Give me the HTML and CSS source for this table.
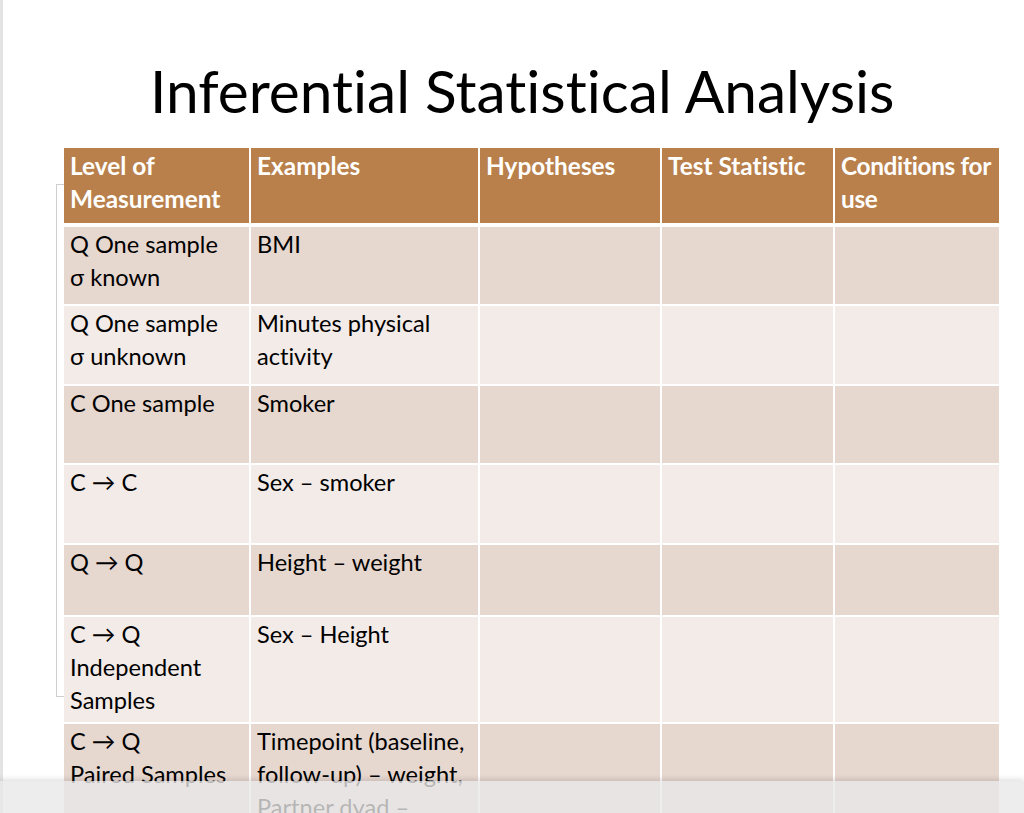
FILE: index.html
```html
<!DOCTYPE html>
<html>
<head>
<meta charset="utf-8">
<link rel="stylesheet" href="styles.css">
</head>
<body>
<div class="page">
  <div class="bracket"></div>
  <h1 class="title">Inferential Statistical Analysis</h1>
  <div class="grid head">
    <div class="cell">Level of Measurement</div>
    <div class="cell">Examples</div>
    <div class="cell">Hypotheses</div>
    <div class="cell">Test Statistic</div>
    <div class="cell tight">Conditions for use</div>
  </div>
  <div class="grid body">
    <div class="cell odd">Q One sample<br>σ known</div>
    <div class="cell odd">BMI</div>
    <div class="cell odd"></div>
    <div class="cell odd"></div>
    <div class="cell odd"></div>

    <div class="cell even">Q One sample<br>σ unknown</div>
    <div class="cell even">Minutes physical activity</div>
    <div class="cell even"></div>
    <div class="cell even"></div>
    <div class="cell even"></div>

    <div class="cell odd">C One sample</div>
    <div class="cell odd">Smoker</div>
    <div class="cell odd"></div>
    <div class="cell odd"></div>
    <div class="cell odd"></div>

    <div class="cell even">C → C</div>
    <div class="cell even">Sex – smoker</div>
    <div class="cell even"></div>
    <div class="cell even"></div>
    <div class="cell even"></div>

    <div class="cell odd">Q → Q</div>
    <div class="cell odd">Height – weight</div>
    <div class="cell odd"></div>
    <div class="cell odd"></div>
    <div class="cell odd"></div>

    <div class="cell even">C → Q<br>Independent Samples</div>
    <div class="cell even">Sex – Height</div>
    <div class="cell even"></div>
    <div class="cell even"></div>
    <div class="cell even"></div>

    <div class="cell odd">C → Q<br>Paired Samples</div>
    <div class="cell odd">Timepoint (baseline, follow-up) – weight, Partner dyad – weight</div>
    <div class="cell odd"></div>
    <div class="cell odd"></div>
    <div class="cell odd"></div>
  </div>
</div>
<div class="dock"></div>
</body>
</html>
```
FILE: styles.css
```css
html, body {
  margin: 0;
  padding: 0;
  height: 100%;
  overflow: hidden;
  background: #ffffff;
}
body {
  font-family: "Lato", "Open Sans", sans-serif;
  font-variant-ligatures: none;
  color: #000;
}
.page {
  position: relative;
  border-left: 3px solid #e3e3e3;
  height: 100%;
  overflow: hidden;
  box-sizing: border-box;
  padding-left: 61px;
  padding-top: 50px;
}
.bracket {
  position: absolute;
  left: 53px;
  top: 184px;
  width: 8px;
  height: 513px;
  border: 1px solid #cfcfcf;
  border-right: none;
  box-sizing: border-box;
}
.title {
  margin: 0 0 0 86px;
  font-weight: 400;
  font-size: 58.6px;
  line-height: 80px;
  height: 98px;
  white-space: nowrap;
}
.grid {
  position: relative;
  display: grid;
  grid-template-columns: 185px 227px 180px 171px 164px;
  column-gap: 2px;
  row-gap: 2px;
  width: 935px;
}
.head {
  grid-template-rows: 75px;
  margin-bottom: 4px;
}
.body {
  grid-template-rows: 77px 78px 77px 78px 70px 105px 120px;
}
.cell {
  padding: 1px 6px 0 6px;
  font-size: 23.6px;
  line-height: 33px;
  box-sizing: border-box;
}
.head .cell {
  background: #b9804b;
  color: #ffffff;
  font-weight: 700;
  font-size: 24.4px;
}
.head .tight {
  padding-right: 0;
  letter-spacing: -0.35px;
}
.odd { background: #e6d7cf; }
.even { background: #f3ebe8; }
.dock {
  position: fixed;
  left: 0;
  right: 0;
  bottom: 0;
  height: 32px;
  background: rgba(232, 232, 232, 0.78);
  box-shadow: 0 -2px 5px rgba(0, 0, 0, 0.12);
}
```
